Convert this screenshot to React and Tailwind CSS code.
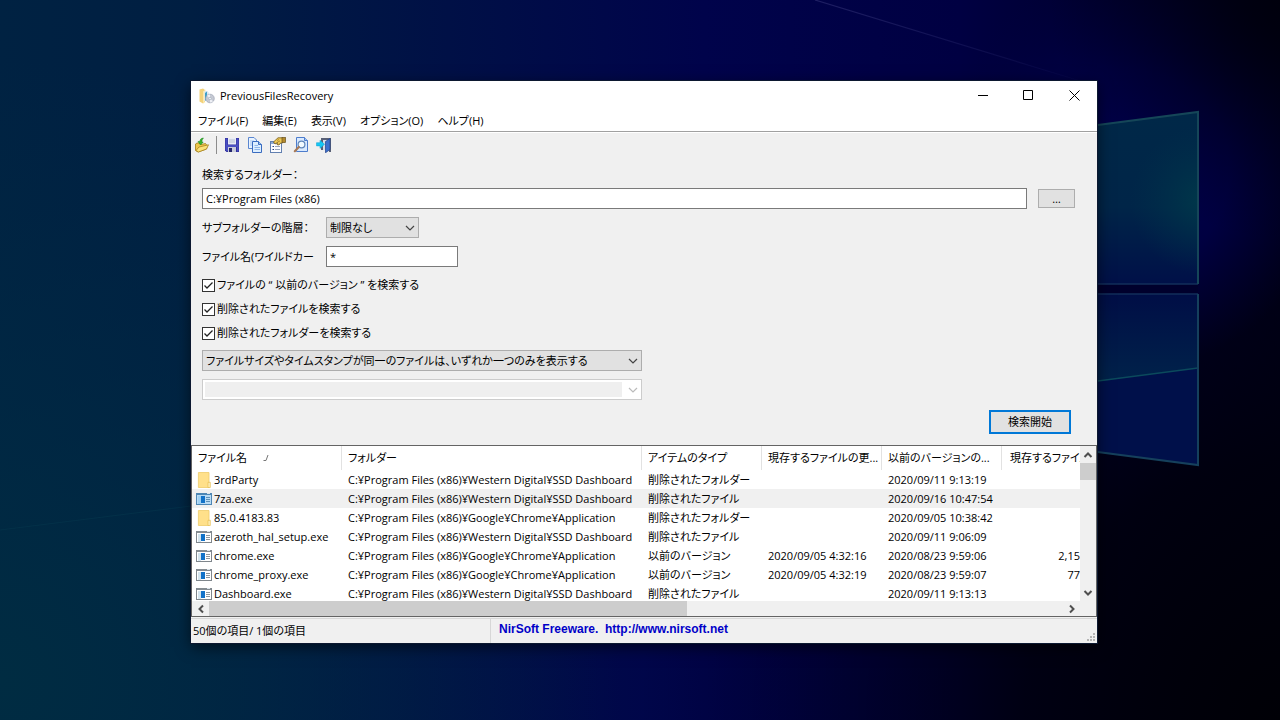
import React from "react";

const rows = [
  ["folder", "3rdParty", "C:¥Program Files (x86)¥Western Digital¥SSD Dashboard", "削除されたフォルダー", "", "2020/09/11 9:13:19", ""],
  ["exe", "7za.exe", "C:¥Program Files (x86)¥Western Digital¥SSD Dashboard", "削除されたファイル", "", "2020/09/16 10:47:54", ""],
  ["folder", "85.0.4183.83", "C:¥Program Files (x86)¥Google¥Chrome¥Application", "削除されたフォルダー", "", "2020/09/05 10:38:42", ""],
  ["exe", "azeroth_hal_setup.exe", "C:¥Program Files (x86)¥Western Digital¥SSD Dashboard", "削除されたファイル", "", "2020/09/11 9:06:09", ""],
  ["exe", "chrome.exe", "C:¥Program Files (x86)¥Google¥Chrome¥Application", "以前のバージョン", "2020/09/05 4:32:16", "2020/08/23 9:59:06", "2,15"],
  ["exe", "chrome_proxy.exe", "C:¥Program Files (x86)¥Google¥Chrome¥Application", "以前のバージョン", "2020/09/05 4:32:19", "2020/08/23 9:59:07", "77"],
  ["exe", "Dashboard.exe", "C:¥Program Files (x86)¥Western Digital¥SSD Dashboard", "削除されたファイル", "", "2020/09/11 9:13:13", ""],
];

const menus = ["ファイル(F)", "編集(E)", "表示(V)", "オプション(O)", "ヘルプ(H)"];

function Wallpaper() {
  return (
    <svg className="absolute inset-0 h-full w-full" viewBox="0 0 1280 720" preserveAspectRatio="none" aria-hidden="true">
      <defs>
        <linearGradient id="base" x1="0" y1="0" x2="1" y2="0">
          <stop offset="0" stopColor="#002242" />
          <stop offset="0.15" stopColor="#001e42" />
          <stop offset="0.35" stopColor="#001046" />
          <stop offset="0.55" stopColor="#00034b" />
          <stop offset="0.75" stopColor="#000042" />
          <stop offset="0.88" stopColor="#00002a" />
          <stop offset="1" stopColor="#000016" />
        </linearGradient>
        <radialGradient id="glow" gradientUnits="userSpaceOnUse" cx="1130" cy="170" r="200">
          <stop offset="0" stopColor="#000050" />
          <stop offset="0.5" stopColor="#00004a" stopOpacity="0.8" />
          <stop offset="1" stopColor="#000040" stopOpacity="0" />
        </radialGradient>
        <radialGradient id="lower" gradientUnits="userSpaceOnUse" cx="0" cy="680" r="620">
          <stop offset="0" stopColor="#002c42" />
          <stop offset="1" stopColor="#002a44" stopOpacity="0" />
        </radialGradient>
        <radialGradient id="dark" gradientUnits="userSpaceOnUse" cx="1280" cy="720" r="640">
          <stop offset="0" stopColor="#000006" />
          <stop offset="0.4" stopColor="#00000c" stopOpacity="0.85" />
          <stop offset="1" stopColor="#000020" stopOpacity="0" />
        </radialGradient>
        <radialGradient id="corner" gradientUnits="userSpaceOnUse" cx="1290" cy="0" r="240">
          <stop offset="0" stopColor="#00000c" />
          <stop offset="1" stopColor="#000018" stopOpacity="0" />
        </radialGradient>
        <linearGradient id="paneA" x1="0" y1="0" x2="0" y2="1">
          <stop offset="0" stopColor="#002848" />
          <stop offset="0.55" stopColor="#002548" />
          <stop offset="1" stopColor="#001048" />
        </linearGradient>
        <radialGradient id="paneGlow" gradientUnits="userSpaceOnUse" cx="1205" cy="200" r="75">
          <stop offset="0" stopColor="#00384a" />
          <stop offset="1" stopColor="#00304a" stopOpacity="0" />
        </radialGradient>
        <linearGradient id="paneB" x1="0" y1="0" x2="0" y2="1">
          <stop offset="0" stopColor="#000e46" />
          <stop offset="1" stopColor="#00224a" />
        </linearGradient>
        <linearGradient id="ray" gradientUnits="userSpaceOnUse" x1="815" y1="0" x2="1110" y2="90">
          <stop offset="0" stopColor="#26266a" stopOpacity="0.8" />
          <stop offset="1" stopColor="#26266a" stopOpacity="0" />
        </linearGradient>
      </defs>
      <rect width="1280" height="720" fill="url(#base)" />
      <rect width="1280" height="720" fill="url(#lower)" />
      <rect width="1280" height="720" fill="url(#dark)" />
      <rect width="1280" height="720" fill="url(#glow)" />
      <rect width="1280" height="720" fill="url(#corner)" />
      <path d="M815 0 L1110 90" stroke="url(#ray)" strokeWidth="1.2" />
      <path d="M0 530 L191 506" stroke="#0a4054" strokeOpacity="0.35" strokeWidth="1.2" />
      <path d="M1090 126 L1198 112 V284 H1090 Z" fill="url(#paneA)" />
      <path d="M1090 126 L1198 112 V284 H1090 Z" fill="url(#paneGlow)" />
      <path d="M1090 284 H1198 V294 H1090 Z" fill="#00002c" />
      <path d="M1090 294 H1198 V465 L1090 451 Z" fill="#00104a" />
      <path d="M1090 294 H1198 V368 L1090 382 Z" fill="url(#paneB)" />
      <path d="M1090 382 L1198 368" stroke="#0b4a5c" strokeWidth="1.3" fill="none" />
      <path d="M1090 284 H1198 M1090 294 H1198" stroke="#122e5a" strokeWidth="1.5" />
      <path d="M1090 126 L1198 112 V284" stroke="#154658" strokeWidth="2" fill="none" />
      <path d="M1198 294 V465 L1090 451" stroke="#15405c" strokeWidth="2" fill="none" />
    </svg>
  );
}

function AppIcon() {
  return (
    <svg width="16" height="16" viewBox="0 0 16 16" aria-hidden="true">
      <path d="M0.5 1.5 L4 0.5 L6 2 V14 L4 15.5 L0.5 13.5 Z" fill="#f3d27a" />
      <path d="M4 3.5 L6.5 1.5 V12 L4 15.5 Z" fill="#fbe9b0" />
      <path d="M5.5 3 H8.5 L10 5 V13 H5.5 Z" fill="#dceaf5" />
      <path d="M6 5 L8 3.5 V11 L6 13 Z" fill="#3f9fc8" />
      <circle cx="11" cy="10.5" r="4.3" fill="#c5c9d3" stroke="#9ea5b4" strokeWidth="0.7" />
      <path d="M11 10.5 L8 7.8 A4 4 0 0 1 11 6.5 Z M11 10.5 L14 13.2 A4 4 0 0 1 11 14.5 Z" fill="#eef0f5" />
      <circle cx="11" cy="10.5" r="1.2" fill="#f8fafc" stroke="#8d98ab" strokeWidth="0.5" />
    </svg>
  );
}

function OpenIcon() {
  return (
    <svg width="16" height="16" viewBox="0 0 16 16" aria-hidden="true">
      <path d="M1.5 13.5 V7 L3 6 H5.5 L7 7.5 L11.5 6.5 L13 8.5 L12.5 12 L4 15 Z" fill="#eec64a" stroke="#a07c18" strokeWidth="0.8" />
      <path d="M2 13.5 L5 10 L14.5 7.8 L12.5 12 L4.5 15 Z" fill="#fbe27a" stroke="#a8821c" strokeWidth="0.8" />
      <path d="M9.5 1 C7 1.2 6 2.5 5.8 4.5 H4 L6.5 8 L9.2 5 H7.8 C8 3 8.6 1.8 9.5 1 Z" fill="#35b52b" stroke="#16801a" strokeWidth="0.5" />
    </svg>
  );
}

function SaveIcon() {
  return (
    <svg width="16" height="16" viewBox="0 0 16 16" aria-hidden="true">
      <path d="M1 1 H15 V15 H2.5 L1 13.5 Z" fill="#30309c" />
      <path d="M1.5 1.5 H3.5 V8 H12.5 V1.5 H14.5 V14.5 H13 V10 H4 V14.5 L1.5 13.2 Z" fill="#4a4fc2" />
      <rect x="4" y="1" width="8" height="6.5" fill="#e9edf6" />
      <path d="M5 3 H11 M5 5 H11" stroke="#b6bed3" />
      <rect x="4" y="10" width="8" height="5" fill="#c8cbd8" />
      <rect x="5" y="11" width="3" height="4" fill="#25276e" />
    </svg>
  );
}

function CopyIcon() {
  return (
    <svg width="16" height="16" viewBox="0 0 16 16" aria-hidden="true">
      <path d="M1.5 0.5 H7 L9.5 3 V11.5 H1.5 Z" fill="#e8f3ff" stroke="#5a86d0" />
      <path d="M3 4 H7 M3 6 H8 M3 8 H8" stroke="#a4c4ee" />
      <path d="M5.5 4.5 H11.5 L14.5 7.5 V15.5 H5.5 Z" fill="#dceeff" stroke="#3a6cc0" />
      <path d="M11.5 4.5 V7.5 H14.5" fill="#9bc2f2" stroke="#3a6cc0" />
      <path d="M7.5 8.5 H11 M7.5 10.5 H13 M7.5 12.5 H13" stroke="#8fb6ea" />
    </svg>
  );
}

function PropertiesIcon() {
  return (
    <svg width="16" height="16" viewBox="0 0 16 16" aria-hidden="true">
      <rect x="0.5" y="4.5" width="11" height="11" fill="#fbfcff" stroke="#6280b0" />
      <rect x="1" y="5" width="10" height="2" fill="#8daad8" />
      <path d="M2.5 9.5 H4 M2.5 12.5 H4" stroke="#26447e" />
      <path d="M5 9.5 H10 M5 12.5 H10" stroke="#9aa6bc" />
      <path d="M3.5 5 L8 0.8 H12.5 V6 H10.5 L9 8 L7 7.5 L7.5 5.5 L5 7 Z" fill="#edc956" stroke="#765b18" strokeWidth="0.8" />
      <path d="M7 3.5 L9 2.5 M7.5 5 L10 4" stroke="#9c7923" strokeWidth="0.7" />
      <rect x="12" y="0.5" width="3.5" height="5" fill="#b58b2d" stroke="#665020" strokeWidth="0.7" />
    </svg>
  );
}

function FindIcon() {
  return (
    <svg width="16" height="16" viewBox="0 0 16 16" aria-hidden="true">
      <path d="M3.5 0.5 H11.5 L14.5 3.5 V14.5 H3.5 Z" fill="#d9eaff" stroke="#4d7ccc" />
      <path d="M11.5 0.5 V3.5 H14.5" fill="#a4c5f5" stroke="#4d7ccc" />
      <circle cx="8.5" cy="7.5" r="3.4" fill="#f2faff" stroke="#5f86ba" strokeWidth="1.2" />
      <path d="M5.8 10 L1.8 14.2" stroke="#a77a58" strokeWidth="2.2" strokeLinecap="round" />
    </svg>
  );
}

function ExitIcon() {
  return (
    <svg width="16" height="16" viewBox="0 0 16 16" aria-hidden="true">
      <path d="M5 1 H15 V15 H13 V3 H7 V13 H5 Z" fill="#596176" />
      <path d="M7 3 H12.5 V13 H7 Z" fill="#d8dde6" />
      <path d="M9.5 4.5 L14 1.5 V12.5 L9.5 15.8 Z" fill="#3c70cc" stroke="#1f418b" strokeWidth="0.7" />
      <path d="M0.5 5.7 H4 V3.2 L8.5 7.3 L4 11.4 V8.9 H0.5 Z" fill="#15c8f4" stroke="#0f9cd0" strokeWidth="0.5" />
    </svg>
  );
}

function FolderIcon() {
  return (
    <svg width="16" height="16" viewBox="0 0 16 16" aria-hidden="true">
      <path d="M2.4 0.5 H13 V15.5 H2.4 Z" fill="#ffe08a" stroke="#efcc6a" strokeWidth="0.8" />
      <path d="M12 15.5 V10.3 H14.3 V15.5 Z" fill="#fff0bb" stroke="#e5bd50" strokeWidth="0.7" />
    </svg>
  );
}

function ExeIcon({ selected }) {
  return (
    <svg width="16" height="16" viewBox="0 0 16 16" aria-hidden="true">
      <rect x="0.5" y="2.5" width="15" height="11" fill={selected ? "#b9dbf4" : "#ffffff"} stroke={selected ? "#4d86b4" : "#7f868c"} />
      <rect x="1" y="2" width="14" height="2" fill={selected ? "#4d86b4" : "#858c92"} />
      <rect x="11" y="2" width="3" height="1" fill="#dbe5ec" />
      <rect x="2" y="5" width="3" height="8" fill={selected ? "#9fd0f3" : "#d5e5ef"} />
      <rect x="5" y="5" width="4" height="7" fill="#1272c8" />
      <path d="M10 6.5 H14 M10 8.5 H14 M10 10.5 H14" stroke={selected ? "#5f91b8" : "#8f979d"} />
    </svg>
  );
}

function Chevron({ className, d = "M1 3 L5 7 L9 3", width = "1.2" }) {
  return (
    <svg className={className} width="10" height="10" viewBox="0 0 10 10" fill="none" stroke="currentColor" strokeWidth={width} aria-hidden="true">
      <path d={d} />
    </svg>
  );
}

function Check({ label }) {
  return (
    <label className="flex h-6 items-center gap-[2px]">
      <span className="relative block size-[13px]">
        <input type="checkbox" defaultChecked className="peer block size-[13px] appearance-none border border-[#333] bg-white" />
        <svg className="pointer-events-none absolute inset-0 hidden peer-checked:block" width="13" height="13" viewBox="0 0 13 13" fill="none" stroke="#222" strokeWidth="1.3" aria-hidden="true">
          <path d="M2.5 6.5 L5 9 L10.5 3.5" />
        </svg>
      </span>
      <span>{label}</span>
    </label>
  );
}

function Combo({ id, className, children, disabled, label }) {
  return (
    <div className={"relative h-[21px] " + className}>
      <select
        id={id}
        aria-label={label}
        disabled={disabled}
        className="block h-full w-full appearance-none border border-[#adadad] bg-[#e1e1e1] pr-5 pl-[3px] text-black opacity-100 disabled:border-[#ccc] disabled:bg-[#efefef] disabled:shadow-[inset_0_0_0_2px_white,inset_-19px_0_0_white]"
      >
        {children}
      </select>
      <Chevron className={"pointer-events-none absolute top-[6px] right-1 " + (disabled ? "text-[#bbb]" : "text-[#444]")} />
    </div>
  );
}

const th = "h-6 overflow-hidden border-r border-[#e2e2e2] pl-[6px] text-left font-normal whitespace-nowrap";
const td = "overflow-hidden pl-[6px] whitespace-nowrap";
const tool = "flex h-6 w-[23px] items-center justify-center";

export default function App() {
  return (
    <main className="relative flex h-screen min-h-[680px] bg-[#001040] pt-[81px] pr-[183px] pb-[77px] pl-[191px] font-['Open_Sans','Noto_Sans_CJK_JP',sans-serif] text-[11px] leading-[18px] text-black [font-feature-settings:'palt']">
      <Wallpaper />
      <section className="relative flex min-w-0 flex-1 flex-col bg-[#f0f0f0] shadow-[0_0_0_1px_#0c1830,0_4px_14px_rgba(0,0,0,0.6)]">
        <header className="flex h-[29px] items-center bg-white pl-2">
          <AppIcon />
          <h1 className="flex-1 pl-[5px]">PreviousFilesRecovery</h1>
          <div className="flex h-full">
            <button aria-label="最小化" className="flex w-[46px] items-center justify-center">
              <svg width="11" height="11" viewBox="0 0 11 11" stroke="black" aria-hidden="true"><path d="M0 5.5 H10" /></svg>
            </button>
            <button aria-label="最大化" className="flex w-[45px] items-center justify-center">
              <svg width="11" height="11" viewBox="0 0 11 11" fill="none" stroke="black" aria-hidden="true"><path d="M0.5 0.5 H9.5 V9.5 H0.5 Z" /></svg>
            </button>
            <button aria-label="閉じる" className="flex w-[46px] items-center justify-center">
              <svg width="11" height="11" viewBox="0 0 11 11" stroke="black" aria-hidden="true"><path d="M0.5 0.5 L10.5 10.5 M10.5 0.5 L0.5 10.5" /></svg>
            </button>
          </div>
        </header>

        <nav className="flex h-[22px] items-center gap-[14px] border-b border-[#a0a0a0] bg-white pl-[7px]">
          {menus.map((m) => (
            <button key={m}>{m}</button>
          ))}
        </nav>

        <div className="flex h-6 items-center border-t border-white" role="toolbar" aria-label="ツールバー">
          <button className="flex h-6 w-[22px] items-center justify-center" aria-label="開く"><OpenIcon /></button>
          <span className="mx-[3px] h-[18px] w-px bg-[#8c8c8c]" />
          <button className={tool} aria-label="保存"><SaveIcon /></button>
          <button className={tool} aria-label="コピー"><CopyIcon /></button>
          <button className={tool} aria-label="プロパティ"><PropertiesIcon /></button>
          <button className={tool} aria-label="検索"><FindIcon /></button>
          <button className={tool} aria-label="終了"><ExitIcon /></button>
        </div>

        <form className="flex flex-col px-[11px] pt-[10px]" onSubmit={(e) => e.preventDefault()}>
          <label htmlFor="folder">検索するフォルダー：</label>
          <div className="mt-1 flex items-center gap-[11px] pr-[11px]">
            <input id="folder" defaultValue="C:¥Program Files (x86)" className="h-[21px] min-w-0 flex-1 border border-[#7a7a7a] bg-white px-[3px]" />
            <button type="button" className="h-[19px] w-[37px] border border-[#adadad] bg-[#e1e1e1] leading-4">…</button>
          </div>
          <div className="mt-2 flex items-center">
            <label htmlFor="depth" className="w-[124px]">サブフォルダーの階層：</label>
            <Combo id="depth" className="w-[93px]"><option>制限なし</option></Combo>
          </div>
          <div className="mt-2 flex items-center">
            <label htmlFor="wild" className="w-[124px]">ファイル名(ワイルドカー</label>
            <input id="wild" defaultValue="*" className="h-[21px] w-[132px] border border-[#7a7a7a] bg-white px-[3px]" />
          </div>
          <div className="mt-[6px] flex flex-col items-start">
            <Check label="ファイルの “ 以前のバージョン ” を検索する" />
            <Check label="削除されたファイルを検索する" />
            <Check label="削除されたフォルダーを検索する" />
          </div>
          <Combo label="同一ファイルの表示" className="mt-[5px] w-[440px]">
            <option>ファイルサイズやタイムスタンプが同一のファイルは、いずれか一つのみを表示する</option>
          </Combo>
          <Combo label="追加の条件" disabled className="mt-2 w-[440px]" />
          <button type="submit" className="mt-[10px] mr-[15px] mb-[11px] h-6 w-[82px] self-end border-2 border-[#0078d7] bg-[#e1e1e1]">検索開始</button>
        </form>

        <div className="flex min-h-0 flex-1 flex-col border border-[#646464] bg-white">
          <div className="flex min-h-0 flex-1">
            <div className="min-w-0 flex-1 overflow-hidden">
              <table className="w-full table-fixed border-separate border-spacing-0">
                <colgroup>
                  <col className="w-[150px]" />
                  <col className="w-[300px]" />
                  <col className="w-[120px]" />
                  <col className="w-[120px]" />
                  <col className="w-[120px]" />
                  <col />
                </colgroup>
                <thead>
                  <tr>
                    <th className={th}>
                      <span className="flex items-center gap-4">
                        ファイル名
                        <svg width="6" height="8" viewBox="0 0 6 8" fill="none" stroke="#777" aria-hidden="true"><path d="M5 1 L3 6.5 H0.5" /></svg>
                      </span>
                    </th>
                    <th className={th}>フォルダー</th>
                    <th className={th}>アイテムのタイプ</th>
                    <th className={th}>現存するファイルの更...</th>
                    <th className={th}>以前のバージョンの...</th>
                    <th className="h-6 overflow-hidden pl-2 text-left font-normal whitespace-nowrap">現存するファイル</th>
                  </tr>
                </thead>
                <tbody>
                  {rows.map(([icon, name, folder, type, current, previous, size]) => {
                    const selected = name === "7za.exe";
                    return (
                      <tr key={name} className={selected ? "h-[19px] bg-[#f0f0f0]" : "h-[19px]"}>
                        <td className="overflow-hidden pl-1 whitespace-nowrap">
                          <span className="flex items-center gap-[2px]">
                            {icon === "folder" ? <FolderIcon /> : <ExeIcon selected={selected} />}
                            {name}
                          </span>
                        </td>
                        <td className={td}>{folder}</td>
                        <td className={td}>{type}</td>
                        <td className={td}>{current}</td>
                        <td className={td}>{previous}</td>
                        <td className="overflow-hidden text-right whitespace-nowrap">{size}</td>
                      </tr>
                    );
                  })}
                </tbody>
              </table>
            </div>
            <div className="flex w-4 flex-col items-center bg-[#f0f0f0] text-[#505050]">
              <button aria-label="上へ" className="flex h-[17px] w-full items-center justify-center"><Chevron d="M1.5 7 L5 3.5 L8.5 7" width="2" /></button>
              <div className="h-[17px] w-full bg-[#cdcdcd]" />
              <div className="flex-1" />
              <button aria-label="下へ" className="flex h-[17px] w-full items-center justify-center"><Chevron d="M1.5 3 L5 6.5 L8.5 3" width="2" /></button>
            </div>
          </div>
          <div className="flex h-[15px] bg-[#f0f0f0] pr-4 text-[#505050]">
            <button aria-label="左へ" className="flex w-[17px] items-center justify-center"><Chevron d="M7 1.5 L3.5 5 L7 8.5" width="2" /></button>
            <div className="flex-1"><div className="h-full w-[56%] bg-[#cdcdcd]" /></div>
            <button aria-label="右へ" className="flex w-[17px] items-center justify-center"><Chevron d="M3 1.5 L6.5 5 L3 8.5" width="2" /></button>
          </div>
        </div>

        <footer className="mt-px flex h-[25px] items-center border-t border-[#d7d7d7]">
          <div className="flex h-full w-[300px] items-center border-r border-[#d7d7d7] pl-[2px]">50個の項目/ 1個の項目</div>
          <a href="http://www.nirsoft.net" className="flex-1 self-start pt-px pl-2 font-['Liberation_Sans',sans-serif] text-[12px] font-bold whitespace-pre text-[#0000c8]">NirSoft Freeware.  http://www.nirsoft.net</a>
          <svg className="mr-px mb-px self-end" width="9" height="9" viewBox="0 0 9 9" fill="#b4b4b4" aria-hidden="true">
            <path d="M6 0h2v2h-2z M3 3h2v2h-2z M6 3h2v2h-2z M0 6h2v2h-2z M3 6h2v2h-2z M6 6h2v2h-2z" />
          </svg>
        </footer>
      </section>
    </main>
  );
}
